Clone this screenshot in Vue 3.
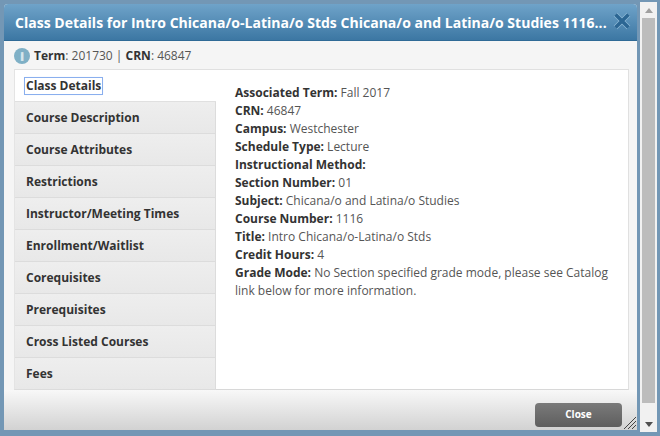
<script setup>
const tabs = ['Class Details','Course Description','Course Attributes','Restrictions','Instructor/Meeting Times','Enrollment/Waitlist','Corequisites','Prerequisites','Cross Listed Courses','Fees']
const rows = [
  ['Associated Term:','Fall 2017'],['CRN:','46847'],['Campus:','Westchester'],['Schedule Type:','Lecture'],
  ['Instructional Method:',''],['Section Number:','01'],['Subject:','Chicana/o and Latina/o Studies'],
  ['Course Number:','1116'],['Title:','Intro Chicana/o-Latina/o Stds'],['Credit Hours:','4'],
  ['Grade Mode:','No Section specified grade mode, please see Catalog link below for more information.']
]
</script>

<template>
  <div class="page">
    <div class="dialog">
      <header class="titlebar">
        <h1 class="title">Class Details for Intro Chicana/o-Latina/o Stds Chicana/o and Latina/o Studies 1116...</h1>
        <svg class="x" width="18" height="18" viewBox="0 0 18 18">
          <path d="M2.5 2.5 L15.5 15.5 M15.5 2.5 L2.5 15.5" stroke="#8fb9d6" stroke-width="5" fill="none"/>
          <path d="M2.5 2.5 L15.5 15.5 M15.5 2.5 L2.5 15.5" stroke="#2c6693" stroke-width="3.6" fill="none"/>
        </svg>
      </header>
      <div class="body">
        <div class="termline">
          <span class="info">i</span>
          <span><b>Term</b>: 201730 | <b>CRN</b>: 46847</span>
        </div>
        <div class="panel">
          <nav class="tabs">
            <div v-for="(t,i) in tabs" :key="t" class="tab" :class="{ active: i === 0 }">
              <span class="tablabel">{{ t }}</span>
            </div>
          </nav>
          <div class="content">
            <div v-for="r in rows" :key="r[0]" class="row"><b>{{ r[0] }}</b> {{ r[1] }}</div>
          </div>
        </div>
      </div>
      <footer class="footer">
        <button class="close">Close</button>
        <svg class="grip" width="13" height="13" viewBox="0 0 13 13">
          <path d="M1 13 L13 1 M5 13 L13 5 M9 13 L13 9" stroke="#444" stroke-width="1" fill="none"/>
        </svg>
      </footer>
    </div>
    <aside class="scrollbar">
      <div class="arrow"><span class="up"></span></div>
      <div class="thumb"></div>
      <div class="arrow"><span class="down"></span></div>
    </aside>
  </div>
</template>

<style>
html, body { margin: 0; background: #7397b5; }
</style>

<style scoped>
.page {
  width: 660px; height: 436px; box-sizing: border-box; overflow: hidden;
  background: #7397b5; display: flex; align-items: flex-start; padding: 2px 3px 0 4px; gap: 3px;
  font-family: "Open Sans", sans-serif; font-size: 12px; color: #444;
}
.dialog { width: 633px; height: 426px; margin-top: 2px; display: flex; flex-direction: column; background: #f5f5f5; border-radius: 4px 4px 0 0; overflow: hidden; }
.titlebar {
  height: 37px; flex: none; display: flex; align-items: center; justify-content: space-between;
  padding: 0 6px 0 11px; box-sizing: border-box;
  background: linear-gradient(#6fa3c9, #3c77a3); border-bottom: 1px solid #2f6a96;
}
.title { margin: 0; font-size: 14px; font-weight: 700; color: #fff; white-space: nowrap; letter-spacing: 0.02px; }
.x { flex: none; margin-top: -3px; }
.body { flex: none; display: flex; flex-direction: column; padding: 0 8px 0 10px; }
.termline { height: 28px; flex: none; display: flex; align-items: center; gap: 4px; color: #555; padding-top: 1px; box-sizing: border-box; }
.termline b { color: #333; }
.info {
  width: 16px; height: 16px; border-radius: 50%; background: #7fb0c6; color: #d5e6ec;
  font-weight: 800; font-size: 13px; line-height: 16px; text-align: center; flex: none;
}
.panel { height: 321px; flex: none; display: flex; background: #fff; border: 1px solid #e0e0e0; border-bottom-color: #d8d8d8; border-left-color: #e4e4e4; box-sizing: border-box; }
.tabs { width: 201px; flex: none; display: flex; flex-direction: column; }
.tab {
  height: 32px; flex: none; box-sizing: border-box; display: flex; align-items: center; padding-left: 11px;
  background: linear-gradient(#eeeeee, #e8e8e8); border-bottom: 1px solid #dcdcdc; border-right: 1px solid #dcdcdc;
  font-weight: 700; color: #333;
}
.tab.active { background: #fff; border-right: none; border-bottom-color: #e0e0e0; }
.tab.active .tablabel { outline: 1px solid #8aafee; box-shadow: 0 0 2px #b4cdf7; padding: 0 1px; margin-left: -1px; line-height: 16px; }
.content { flex: 1; padding: 14px 18px 0 19px; line-height: 18px; color: #555; }
.content b { color: #333; }
.footer {
  flex: none; height: 40px; position: relative; display: flex; justify-content: flex-end; align-items: flex-start;
  padding: 13px 15px 0 0; box-sizing: border-box;
  background: linear-gradient(#f8f8f8, #d2d2d2);
}
.close {
  width: 87px; height: 24px; border: none; border-radius: 4px; padding: 0 0 2px;
  background: linear-gradient(#7a7a7a, #5e5e5e); color: #fff; font: 700 10px "Open Sans", sans-serif;
}
.grip { position: absolute; right: 1px; bottom: 1px; }
.scrollbar { width: 17px; height: 430px; flex: none; background: #f1f1f1; display: flex; flex-direction: column; }
.arrow { height: 16px; flex: none; display: flex; align-items: center; justify-content: center; }
.up { border: 4px solid transparent; border-top: none; border-bottom: 5px solid #a0a0a0; }
.down { border: 4px solid transparent; border-bottom: none; border-top: 5px solid #505050; }
.thumb { flex: 1; margin: 0 2px 13px; background: #bcbcbc; }
</style>
